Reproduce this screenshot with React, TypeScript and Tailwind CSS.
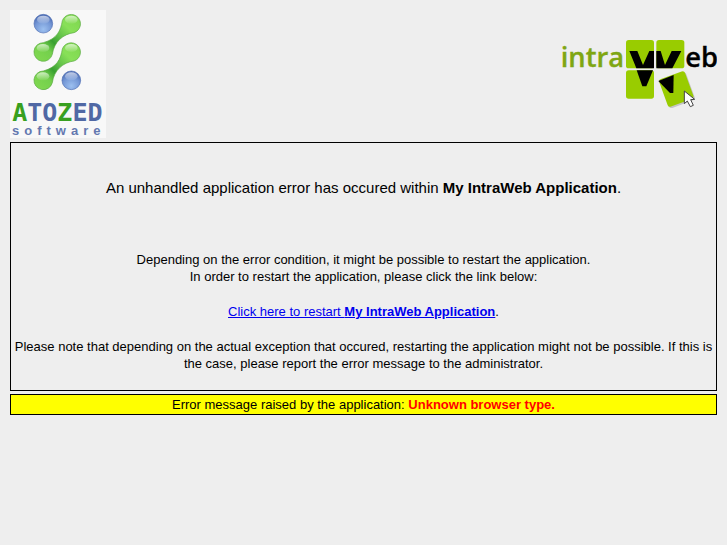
function AtozedLogo() {
  return (
    <svg
      viewBox="30 30 288 384"
      className="h-32 w-24 bg-[#f8f8f8]"
      role="img"
      aria-label="Atozed Software"
    >
      <defs>
        <radialGradient id="blueBall" cx="0.5" cy="0.8" r="0.75">
          <stop offset="0" stopColor="#9cc0f0" />
          <stop offset="0.6" stopColor="#7598d6" />
          <stop offset="1" stopColor="#4c6cb4" />
        </radialGradient>
        <linearGradient id="body" gradientUnits="userSpaceOnUse" x1="110" y1="176" x2="234" y2="52">
          <stop offset="0" stopColor="#80d850" />
          <stop offset="0.24" stopColor="#74d04c" />
          <stop offset="0.4" stopColor="#38a030" />
          <stop offset="0.55" stopColor="#60c048" />
          <stop offset="0.75" stopColor="#88e058" />
          <stop offset="1" stopColor="#80d850" />
        </linearGradient>
        <linearGradient id="shine" x1="0" y1="0" x2="0" y2="1">
          <stop offset="0" stopColor="#fff" stopOpacity="0.65" />
          <stop offset="1" stopColor="#fff" stopOpacity="0.05" />
        </linearGradient>
        <g id="dumbbell">
          <path
            d="M187 62 A28 28 0 1 1 222 98 C190 102 162 125 157 163 A28 28 0 1 1 130 128 C172 116 182 92 187 62 Z"
            fill="url(#body)"
            stroke="#58a840"
            strokeWidth="2"
          />
          <ellipse cx="214" cy="59" rx="19" ry="12" fill="url(#shine)" />
          <ellipse cx="129" cy="144" rx="19" ry="12" fill="url(#shine)" />
        </g>
        <g id="ball">
          <circle r="28" fill="url(#blueBall)" stroke="#5070b4" strokeWidth="2" />
          <ellipse cy="-12" rx="19" ry="12" fill="url(#shine)" />
        </g>
      </defs>
      <use href="#ball" x="130" y="71" />
      <use href="#dumbbell" />
      <use href="#dumbbell" y="85" />
      <use href="#ball" x="214" y="241" />
      <text
        x="172"
        y="362"
        textAnchor="middle"
        fill="#5068a4"
        className="font-['DejaVu_Sans_Mono',monospace] text-[75px] font-bold"
      >
        <tspan fill="#38a020">A</tspan>TO<tspan fill="#38a020">Z</tspan>ED
      </text>
      <text
        x="36"
        y="406"
        fill="#6478b0"
        className="font-['Liberation_Sans',sans-serif] text-[39px] font-bold tracking-[15px]"
      >
        software
      </text>
    </svg>
  );
}

function IntraWebLogo() {
  return (
    <svg
      viewBox="30 24 471 216"
      className="h-[72px] w-[157px]"
      role="img"
      aria-label="IntraWeb"
    >
      <text
        x="32"
        y="110"
        fill="#7fa612"
        stroke="#7fa612"
        strokeWidth="1"
        className="font-['Open_Sans',sans-serif] text-[82px] font-semibold"
      >
        intra
      </text>
      <g fill="#99cc00">
        <rect x="228" y="30" width="84" height="85" rx="8" />
        <rect x="319" y="30" width="84" height="85" rx="8" />
        <rect x="228" y="121" width="84" height="85" rx="8" />
      </g>
      <rect x="342" y="137" width="82" height="88" rx="8" fill="#c4c4c4" transform="rotate(-20 383 181)" />
      <rect x="338" y="133" width="82" height="88" rx="8" fill="#99cc00" transform="rotate(-20 379 177)" />
      <path d="M238 63h24l17 42 19-42h14v52h-53z" fill="#000" />
      <path d="M319 63h13l13 42 20-42h29l-27 52h-48z" fill="#000" />
      <path d="M260 121h49l-20 48h-12z" fill="#000" />
      <path d="M325 153l46-18-1 54h-10z" fill="#000" />
      <path
        d="M403 183v38l9-8 9 17 9-4-8-17 12-1z"
        fill="#fff"
        stroke="#444"
        strokeWidth="3"
      />
      <text
        x="406"
        y="110"
        stroke="#000"
        strokeWidth="1"
        className="font-['Open_Sans',sans-serif] text-[82px] font-semibold"
      >
        eb
      </text>
    </svg>
  );
}

export default function App() {
  return (
    <div className="min-h-screen bg-[#eeeeee] p-[10px] font-['Liberation_Sans',Arial,sans-serif] text-[13px] leading-[17px] text-black">
      <header className="mb-1 flex items-center justify-between">
        <AtozedLogo />
        <IntraWebLogo />
      </header>
      <main className="text-center">
        <section className="border border-black px-[3px] pt-9 pb-[18px]">
          <h1 className="mb-[54px] text-[15px] leading-[18px]">
            An unhandled application error has occured within{" "}
            <b>My IntraWeb Application</b>.
          </h1>
          <p>
            Depending on the error condition, it might be possible to restart the application.
            <br />
            In order to restart the application, please click the link below:
          </p>
          <p className="my-[18px]">
            <a href="#restart" className="text-[#0000ee] underline">
              Click here to restart <b>My IntraWeb Application</b>
            </a>
            .
          </p>
          <p>
            Please note that depending on the actual exception that occured, restarting the
            application might not be possible. If this is the case, please report the error message
            to the administrator.
          </p>
        </section>
        <p className="mt-[3px] border border-black bg-[#ffff00] py-px">
          Error message raised by the application:{" "}
          <b className="text-[#ff0000]">Unknown browser type.</b>
        </p>
      </main>
    </div>
  );
}
